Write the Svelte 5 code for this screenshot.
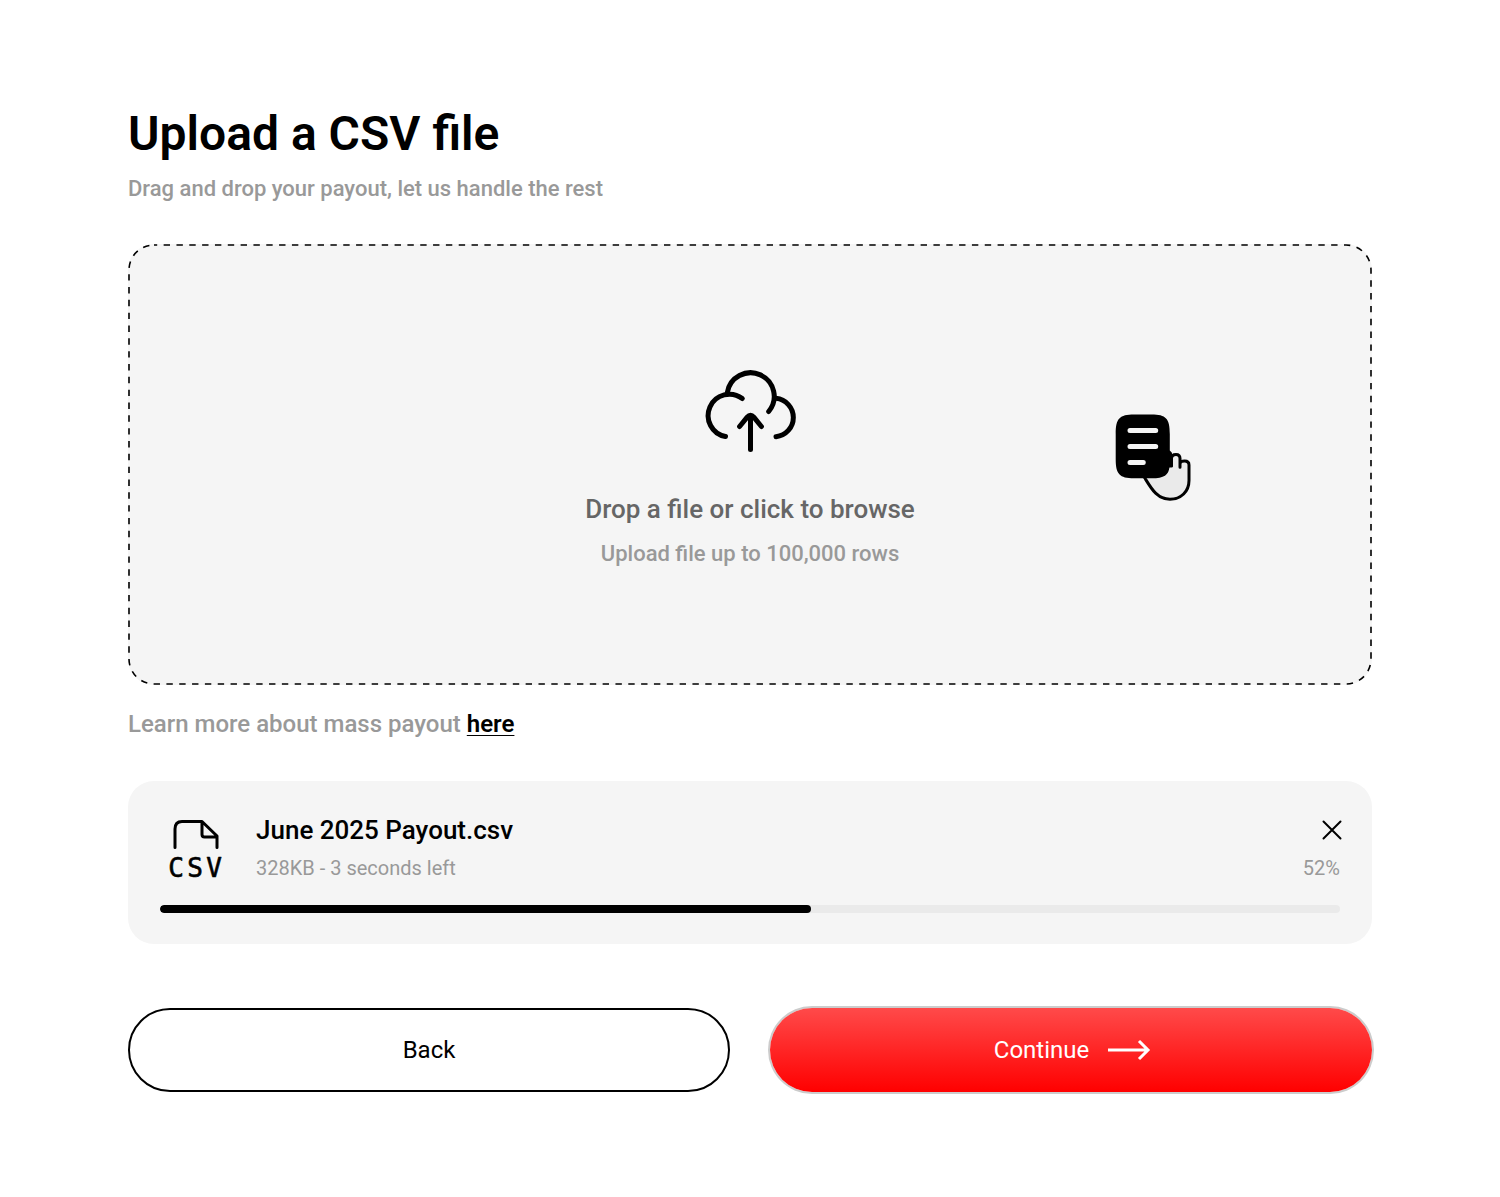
<script>
  const upload = {
    name: 'June 2025 Payout.csv',
    detail: '328KB - 3 seconds left',
    percent: 52,
    bar: 55.2
  };
</script>

<main>
  <header>
    <h1>Upload a CSV file</h1>
    <p class="muted">Drag and drop your payout, let us handle the rest</p>
  </header>

  <label class="dropzone">
    <input type="file" accept=".csv" />
    <svg class="outline" aria-hidden="true"><rect x="1" y="1" rx="25" /></svg>
    <svg class="cloud" viewBox="0 0 120 100" aria-hidden="true">
      <path d="M35.5 76.5A21.3 21.3 0 1 1 52.3 38.6" />
      <path d="M37.3 32.6A23.6 23.6 0 1 1 78.7 51.5" />
      <path d="M86 38.3A19.3 19.3 0 0 1 86 76.7" />
      <path d="M60.5 89.5V56M49.6 66.5L57.2 57.2Q60.5 53.4 63.8 57.2L71.4 66.5" />
    </svg>
    <span class="prompt">Drop a file or click to browse</span>
    <span class="limit muted">Upload file up to 100,000 rows</span>
    <svg class="drag" viewBox="0 0 110 110" aria-hidden="true">
      <path class="hand" d="M44.5 77.5C51 88 57 99.3 70 99.3C81 99.3 89 91.5 89 80.5V65C89 62.3 87.3 61 84.6 61C82.2 61 80.3 62 80 63.3V67.3V58.5C80 55.8 78.7 54.4 76 54.4C73.3 54.4 71.5 55.8 71.5 58.5V66L60 66Z" />
      <path class="sheet" d="M15.7 34C15.7 18.5 19.5 14.6 34 14.6H51.5C66 14.6 69.8 18.5 69.8 34V50.5Q72.3 52 72.5 55V67H69.5C68.5 75 64.5 78.3 51.5 78.3H34C19.5 78.3 15.7 74.1 15.7 59Z" />
      <path class="rules" d="M30 30.5H55.7M30 46.5H55.7M30 62.5H43.3" />
    </svg>
  </label>

  <p class="learn muted">Learn more about mass payout <a href="#mass-payout">here</a></p>

  <section class="file">
    <div class="info">
      <svg class="csv" viewBox="0 0 64 64" aria-hidden="true">
        <path d="M15 33.5V15Q15 7.5 22 7.5H42L57 22V33.5M42 7.5V20.5Q42 23 44.5 23H57" />
        <text x="16" y="63">C</text>
        <text x="35" y="63">S</text>
        <text x="54" y="63">V</text>
      </svg>
      <div class="name">
        <h2>{upload.name}</h2>
        <p>{upload.detail}</p>
      </div>
      <div class="status">
        <button class="close" type="button" aria-label="Cancel upload">
          <svg viewBox="0 0 20 20" aria-hidden="true"><path d="M1.5 1.5L18.5 18.5M18.5 1.5L1.5 18.5" /></svg>
        </button>
        <p>{upload.percent}%</p>
      </div>
    </div>
    <progress max="100" value={upload.bar} aria-label="Upload progress"></progress>
  </section>

  <div class="actions">
    <button class="back" type="button">Back</button>
    <button class="continue" type="button">
      Continue
      <svg viewBox="0 0 44 24" aria-hidden="true"><path d="M1 12H41M32 3L41 12L32 21" /></svg>
    </button>
  </div>
</main>

<style>
  :global(body) {
    margin: 0;
    background: #fff;
  }
  main {
    padding: 106px 128px 104px;
    font-family: Roboto, sans-serif;
    color: #000;
  }
  h1, h2, p {
    margin: 0;
  }
  h1 {
    font-size: 48px;
    line-height: 56px;
    font-weight: 600;
  }
  .muted {
    color: #999;
    font-size: 22px;
    line-height: 28px;
    font-weight: 500;
  }
  header .muted {
    margin-top: 13px;
  }
  .dropzone {
    position: relative;
    display: flex;
    flex-direction: column;
    align-items: center;
    box-sizing: border-box;
    margin-top: 41px;
    padding: 116px 24px 117px;
    border-radius: 26px;
    background: #f5f5f5;
    cursor: pointer;
  }
  .dropzone input {
    position: absolute;
    inset: 0;
    opacity: 0;
  }
  .outline {
    position: absolute;
    inset: 0;
    width: 100%;
    height: 100%;
  }
  .outline rect {
    width: calc(100% - 2px);
    height: calc(100% - 2px);
    fill: none;
    stroke: #000;
    stroke-width: 1.6;
    stroke-dasharray: 6.4 6.43;
    stroke-dashoffset: 3.2;
  }
  .cloud {
    width: 120px;
    height: 100px;
    fill: none;
    stroke: #000;
    stroke-width: 5;
    stroke-linecap: round;
    stroke-linejoin: round;
  }
  .prompt {
    margin-top: 33px;
    font-size: 26px;
    line-height: 32px;
    font-weight: 500;
    color: #666;
  }
  .limit {
    margin-top: 15px;
  }
  .drag {
    position: absolute;
    top: 156px;
    right: 162px;
    width: 110px;
    height: 110px;
  }
  .hand {
    fill: #eaeaea;
    stroke: #000;
    stroke-width: 3;
    stroke-linejoin: round;
  }
  .rules {
    fill: none;
    stroke: #f5f5f5;
    stroke-width: 5;
    stroke-linecap: round;
  }
  .learn {
    margin-top: 25px;
    font-size: 24px;
  }
  a {
    color: #000;
    font-weight: 600;
    text-decoration: underline;
    text-decoration-thickness: 1px;
    text-underline-offset: 3px;
  }
  .file {
    margin-top: 43px;
    padding: 33px 32px 31px;
    border-radius: 26px;
    background: #f5f5f5;
  }
  .info {
    display: flex;
  }
  .csv {
    width: 64px;
    height: 64px;
    margin-right: 32px;
    overflow: visible;
    fill: none;
    stroke: #000;
    stroke-width: 3;
    stroke-linecap: round;
    stroke-linejoin: round;
  }
  .csv text {
    font-family: "DejaVu Sans Mono", monospace;
    font-size: 26px;
    text-anchor: middle;
    fill: #000;
    stroke-width: 0.6;
  }
  .name {
    flex: 1;
  }
  h2 {
    font-size: 26px;
    line-height: 32px;
    font-weight: 500;
  }
  .file p {
    margin-top: 10px;
    font-size: 20px;
    line-height: 24px;
    color: #999;
  }
  .status {
    text-align: right;
  }
  .close {
    display: flex;
    justify-content: flex-end;
    align-items: center;
    width: 32px;
    height: 32px;
    margin-left: auto;
    margin-right: -2px;
    padding: 0;
    border: 0;
    background: none;
  }
  .close svg {
    width: 20px;
    height: 20px;
    fill: none;
    stroke: #000;
    stroke-width: 2;
    stroke-linecap: round;
  }
  progress {
    display: block;
    width: 100%;
    height: 8px;
    margin-top: 25px;
    appearance: none;
    border: 0;
    border-radius: 4px;
    overflow: hidden;
    background: #eaeaea;
  }
  progress::-webkit-progress-bar {
    background: #eaeaea;
  }
  progress::-webkit-progress-value {
    border-radius: 4px;
    background: #000;
  }
  .actions {
    display: grid;
    grid-template-columns: 1fr 1fr;
    gap: 40px;
    margin-top: 64px;
  }
  .actions button {
    display: flex;
    justify-content: center;
    align-items: center;
    gap: 18px;
    height: 84px;
    border-radius: 42px;
    font-family: inherit;
    font-size: 24px;
    line-height: 28px;
  }
  .back {
    border: 2px solid #000;
    background: #fff;
    color: #000;
  }
  .actions .continue {
    padding: 0 6px 0 9px;
    border: 0;
    background: linear-gradient(#ff4a4a, #f00);
    box-shadow: 0 0 0 2px #ccc;
    color: #fff;
  }
  .continue svg {
    width: 44px;
    height: 24px;
    fill: none;
    stroke: #fff;
    stroke-width: 3;
  }
</style>
